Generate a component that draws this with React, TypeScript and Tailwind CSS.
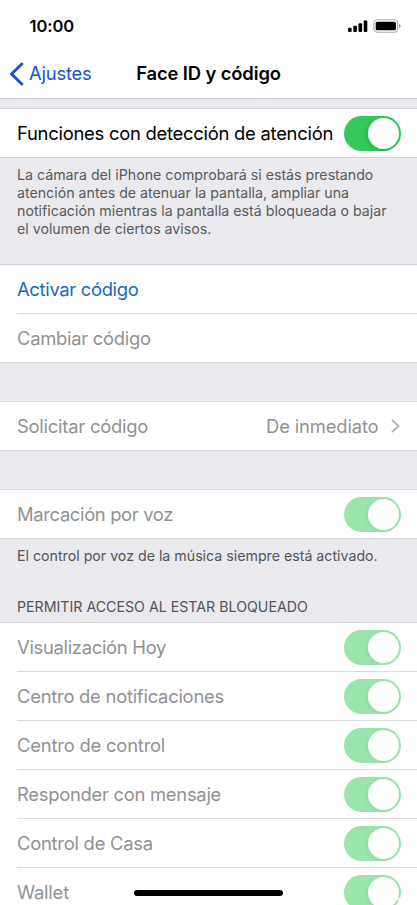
import React from "react";

function Toggle({ disabled = false }: { disabled?: boolean }) {
  return (
    <span
      role="switch"
      aria-checked="true"
      className={`flex h-[35px] w-[57px] shrink-0 items-center justify-end rounded-full pr-[2px] ${
        disabled ? "bg-[#9ae5ab]" : "bg-[#35c759]"
      }`}
    >
      <span
        className={`h-[31px] w-[30.5px] rounded-full bg-white ${
          disabled ? "shadow-[-1px_1px_4px_rgba(0,60,0,0.08)]" : "shadow-[-1px_1px_4px_rgba(0,60,0,0.22)]"
        }`}
      />
    </span>
  );
}

function Row({
  label,
  tracking,
  color = "text-[#929292]",
  children,
}: {
  label: string;
  tracking: string;
  color?: string;
  children?: React.ReactNode;
}) {
  return (
    <div className={`flex h-12 items-center justify-between pr-[16.5px] text-[18.4px] whitespace-nowrap ${color}`}>
      <span className={`pt-[2px] ${tracking}`}>{label}</span>
      {children}
    </div>
  );
}

function Section({ children }: { children: React.ReactNode }) {
  return <section className="border-y border-[#d6d6d9] bg-white pl-[17px]">{children}</section>;
}

function Divider() {
  return <div className="h-px bg-[#dcdcde]" />;
}

const lockedItems = [
  { label: "Visualización Hoy", tracking: "tracking-[-0.3px]" },
  { label: "Centro de notificaciones", tracking: "tracking-[-0.25px]" },
  { label: "Centro de control", tracking: "tracking-[-0.2px]" },
  { label: "Responder con mensaje", tracking: "tracking-[-0.27px]" },
  { label: "Control de Casa", tracking: "tracking-[-0.25px]" },
  { label: "Wallet", tracking: "tracking-[-0.2px]" },
];

export default function App() {
  return (
    <div className="relative h-[905px] w-[417px] overflow-hidden bg-[#e9e9ee] font-['Inter',sans-serif]">
      <header className="h-[98px] bg-white">
        <div className="flex h-[50px] items-center justify-between pr-[16px] pl-[29.5px]">
          <span className="pt-[2px] text-[16.5px] font-semibold tracking-[-0.05px] text-black">10:00</span>
          <svg width="54" height="14" viewBox="0 0 54 14" className="mt-[1px]">
            <g fill="#000">
              <rect x="1" y="8.7" width="3.6" height="4.3" rx="1" />
              <rect x="6.3" y="6.7" width="3.6" height="6.3" rx="1" />
              <rect x="11.5" y="4.2" width="3.6" height="8.8" rx="1" />
              <rect x="16.7" y="1.5" width="3.6" height="11.5" rx="1" />
              <rect x="28.7" y="2.7" width="20.2" height="8.6" rx="1.6" />
            </g>
            <rect x="26.9" y="0.8" width="23.8" height="12.4" rx="3.6" fill="none" stroke="#aaa" strokeWidth="1.1" />
            <path d="M52 5v4c1-.3 1.5-1.1 1.5-2s-.5-1.7-1.5-2z" fill="#999" />
          </svg>
        </div>
        <div className="grid h-[48px] grid-cols-[1fr_auto_1fr] items-center">
          <div className="flex items-center gap-[5px] pl-[9px] text-[18.4px] text-[#1554d1]">
            <svg width="15" height="24" viewBox="0 0 15 24" fill="none" stroke="#1554d1" strokeWidth="3" strokeLinecap="round" strokeLinejoin="round">
              <path d="M12.8 2 2.5 12l10.3 10" />
            </svg>
            <span className="tracking-[-0.2px]">Ajustes</span>
          </div>
          <h1 className="text-[18.4px] font-semibold tracking-[-0.12px] text-black">Face ID y código</h1>
          <span />
        </div>
      </header>
      <div className="h-[10px] border-t border-[#cfcfd2]" />
      <Section>
        <Row label="Funciones con detección de atención" tracking="tracking-[-0.25px]" color="text-black">
          <Toggle />
        </Row>
      </Section>
      <p className="h-[106px] pt-[8px] pl-[17px] text-[14.2px] leading-[18px] whitespace-nowrap text-[#59595d]">
        <span className="block">La cámara del iPhone comprobará si estás prestando</span>
        <span className="block">atención antes de atenuar la pantalla, ampliar una</span>
        <span className="block">notificación mientras la pantalla está bloqueada o bajar</span>
        <span className="block">el volumen de ciertos avisos.</span>
      </p>
      <Section>
        <Row label="Activar código" tracking="tracking-[-0.32px]" color="text-[#1768c2]" />
        <Divider />
        <Row label="Cambiar código" tracking="tracking-[-0.28px]" />
      </Section>
      <div className="h-[38px]" />
      <Section>
        <Row label="Solicitar código" tracking="tracking-[-0.23px]">
          <span className="flex items-center gap-[11px]">
            <span className="pt-[2px] tracking-[-0.15px]">De inmediato</span>
            <svg width="11" height="16" viewBox="0 0 11 16" fill="none" stroke="#b5b5b7" strokeWidth="2">
              <path d="m2 2 6.5 6-6.5 6" />
            </svg>
          </span>
        </Row>
      </Section>
      <div className="h-[38px]" />
      <Section>
        <Row label="Marcación por voz" tracking="tracking-[-0.34px]">
          <Toggle disabled />
        </Row>
      </Section>
      <div className="flex h-[83px] flex-col justify-between pt-[7px] pb-[6px] pl-[17px] text-[14.2px] leading-[19px] whitespace-nowrap text-[#545458]">
        <p>El control por voz de la música siempre está activado.</p>
        <h2>PERMITIR ACCESO AL ESTAR BLOQUEADO</h2>
      </div>
      <Section>
        {lockedItems.map((item, index) => (
          <React.Fragment key={item.label}>
            {index > 0 && <Divider />}
            <Row label={item.label} tracking={item.tracking}>
              <Toggle disabled />
            </Row>
          </React.Fragment>
        ))}
      </Section>
      {/* Display corner that cuts off the edge of the last switch */}
      <div className="absolute right-0 bottom-0 h-[7px] w-[19px] bg-white" />
      <div className="absolute top-[890px] left-[134px] h-[6px] w-[149px] rounded-full bg-black" />
    </div>
  );
}
